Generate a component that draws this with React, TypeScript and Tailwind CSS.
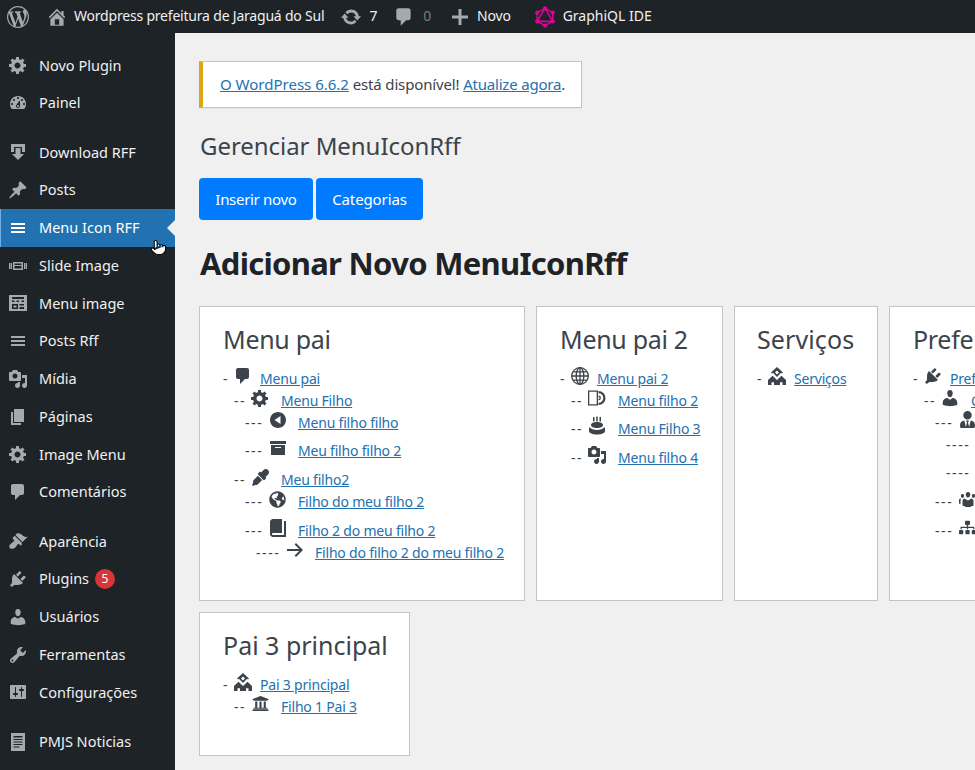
import type { ReactNode } from "react";
import { FaEyeDropper, FaGlobeAmericas, FaSitemap, FaUniversity, FaUserTie } from "react-icons/fa";
import { Pointer } from "lucide-react";

const paths = {
  wp: "M20 10c0-5.51-4.49-10-10-10C4.48 0 0 4.49 0 10c0 5.52 4.48 10 10 10 5.51 0 10-4.48 10-10zM7.780 15.370L4.370 6.220c.550-.020 1.170-.080 1.170-.080.500-.060.440-1.130-.060-1.110 0 0-1.450.110-2.370.110-.180 0-.370 0-.580-.010C4.120 2.690 6.870 1.070 10 1.070c2.330 0 4.450.870 6.050 2.340-.680-.110-1.650.390-1.650 1.580 0 .740.450 1.360.900 2.100.350.610.550 1.360.550 2.460 0 1.490-1.400 5-1.400 5l-3.030-8.350c.540-.020.820-.170.820-.170.500-.050.440-1.250-.060-1.220 0 0-1.440.120-2.380.120-.870 0-2.330-.120-2.330-.120-.500-.030-.560 1.200-.060 1.220l.920.080 1.260 3.410zM17.410 10c.240-.640.740-1.870.430-4.250.700 1.290 1.050 2.710 1.050 4.250 0 3.290-1.730 6.240-4.400 7.780.970-2.590 1.940-5.200 2.920-7.780zM6.100 18.090C3.120 16.650 1.110 13.530 1.110 10c0-1.300.230-2.480.720-3.590C3.250 10.300 4.670 14.200 6.100 18.090zm4.030-6.630l2.580 6.980c-.860.290-1.760.450-2.710.450-.790 0-1.570-.110-2.290-.330.810-2.380 1.620-4.740 2.420-7.100z",
  home: "M16 8.500l1.530 1.530-1.060 1.060L10 4.620l-6.470 6.470-1.060-1.060L10 2.500l4 4v-2h2v4zm-6-2.460l6 5.990V18H4v-5.970zM12 17v-5H8v5h4z",
  update: "M10.200 3.280c3.530 0 6.430 2.610 6.920 6h2.080l-3.500 4-3.500-4h2.320c-.450-1.970-2.210-3.450-4.320-3.450-1.450 0-2.730.710-3.540 1.780L4.950 5.660C6.230 4.200 8.110 3.280 10.200 3.280zm-.400 13.440c-3.520 0-6.430-2.610-6.920-6H.8l3.500-4c1.170 1.330 2.330 2.670 3.500 4H5.480c.450 1.970 2.210 3.450 4.320 3.450 1.450 0 2.730-.710 3.540-1.780l1.710 1.950c-1.280 1.460-3.150 2.380-5.250 2.380z",
  comment: "M5 2h9c1.100 0 2 .9 2 2v7c0 1.100-.9 2-2 2h-2l-5 5v-5H5c-1.100 0-2-.9-2-2V4c0-1.100.9-2 2-2z",
  plus: "M18 8.500v3h-6.500V18h-3v-6.500H2v-3h6.500V2h3v6.500z",
  gear: "M18 12h-2.180c-.170.700-.440 1.350-.810 1.930l1.540 1.540-2.100 2.100-1.540-1.540c-.580.360-1.230.630-1.910.790V19H8v-2.180c-.680-.160-1.330-.430-1.910-.790l-1.540 1.540-2.120-2.120 1.540-1.540c-.360-.580-.630-1.230-.790-1.910H1V9.030h2.170c.160-.700.440-1.350.8-1.940L2.430 5.550l2.100-2.100 1.540 1.540c.580-.370 1.240-.640 1.930-.810V2h3v2.180c.680.160 1.330.430 1.910.790l1.540-1.540 2.120 2.120-1.540 1.540c.360.590.640 1.240.8 1.940H18V12zm-8.500 1.500c1.660 0 3-1.340 3-3s-1.340-3-3-3-3 1.340-3 3 1.340 3 3 3z",
  dashboard: "M3.760 16h12.480c1.100-1.370 1.760-3.110 1.760-5 0-4.420-3.580-8-8-8s-8 3.580-8 8c0 1.890.660 3.630 1.760 5zM10 4c.550 0 1 .450 1 1s-.450 1-1 1-1-.450-1-1 .450-1 1-1zM6 6c.550 0 1 .450 1 1s-.450 1-1 1-1-.450-1-1 .450-1 1-1zm8 0c.550 0 1 .450 1 1s-.450 1-1 1-1-.450-1-1 .450-1 1-1zm-5.370 5.550L12 7v6c0 1.100-.9 2-2 2s-2-.9-2-2c0-.570.240-1.080.630-1.450zM4 10c.550 0 1 .450 1 1s-.450 1-1 1-1-.450-1-1 .450-1 1-1zm12 0c.550 0 1 .450 1 1s-.450 1-1 1-1-.450-1-1 .450-1 1-1zm-5 3c0-.550-.450-1-1-1s-1 .450-1 1 .450 1 1 1 1-.450 1-1z",
  download: "M3 2h14v8h-3V5H6v5H3zM7.500 6h5v6H16l-6 6-6-6h3.500z",
  pin: "M10.440 3.020l1.820-1.820 6.360 6.350-1.830 1.820c-1.050-.680-2.480-.570-3.410.360l-.750.750c-.920.930-1.040 2.350-.350 3.410l-1.830 1.820-2.410-2.410-2.800 2.790c-.420.420-3.380 2.710-3.800 2.290s1.860-3.390 2.280-3.810l2.790-2.790L4.100 9.360l1.830-1.820c1.050.690 2.480.570 3.400-.360l.750-.750c.930-.920 1.050-2.350.360-3.410z",
  menu: "M17 7V5H3v2h14zm0 4V9H3v2h14zm0 4v-2H3v2h14z",
  slides: "M5 6h10v8H5V6zm1.500 1.500v1.500h7V7.500h-7zM6.500 10v2.500h7V10h-7zM1 7h1.500v6H1V7zm2 0h1v6H3V7zM16 7h1v6h-1V7zm1.500 0H19v6h-1.500V7z",
  table: "M1 2h18v16H1V2zm3 2v2h12V4H4zm0 3.500V9h2.500V7.500H4zm4.500 0V9H11V7.500H8.500zm5 0V9H16V7.500h-2.500zM4 11v5h6v-5H4zm1.500 1.500h3v2h-3v-2zM11.500 11v1.500H16V11h-4.500zm0 3v2H16v-2h-4.500z",
  media: "M13 11V4c0-.550-.450-1-1-1h-1.670L9 1H5L3.670 3H2c-.550 0-1 .450-1 1v7c0 .550.450 1 1 1h10c.550 0 1-.450 1-1zM7 4.500c1.380 0 2.500 1.120 2.500 2.500S8.380 9.500 7 9.500 4.500 8.380 4.500 7 5.620 4.500 7 4.500zM14 6h5v10.500c0 1.380-1.120 2.500-2.500 2.500S14 17.880 14 16.500s1.120-2.500 2.500-2.500c.170 0 .340.020.500.050V9h-3V6zm-4 8.050V13h2v3.500c0 1.380-1.120 2.500-2.500 2.500S7 17.880 7 16.500 8.120 14 9.500 14c.170 0 .340.020.500.050z",
  pages: "M6 15V2h10v13H6zm-1 1h8v2H3V5h2v11z",
  brush: "M14.480 11.060L7.410 3.990l1.500-1.500c.500-.560 2.300-.470 3.510.320 1.210.8 1.430 1.280 2.910 2.100 1.180.640 2.450 1.260 4.450.850zm-.710.710L6.700 4.700 4.930 6.470c-.390.390-.390 1.020 0 1.410l1.060 1.060c.390.390.390 1.030 0 1.420-.6.600-1.430 1.110-2.210 1.690-.350.260-.7.530-1.010.840C1.430 13.230.78 15.960 2 17.180c1.220 1.220 3.950.570 5.290-.770.310-.310.580-.660.840-1.010.580-.780 1.090-1.610 1.690-2.210.390-.390 1.030-.390 1.420 0l1.060 1.060c.390.390 1.020.390 1.410 0z",
  plugin: "M13.110 4.360L9.870 7.600 8 5.730l3.240-3.240c.350-.340 1.050-.2 1.560.320.520.510.660 1.210.310 1.550zm-8 1.770l.910-1.120 9.010 9.010-1.190.840c-.710.710-2.630 1.160-3.820 1.160H6.140L4.900 17.260c-.590.590-1.540.590-2.120 0-.590-.580-.590-1.530 0-2.120l1.240-1.240v-3.880c0-1.130.4-3.190 1.090-3.890zm7.260 3.970l3.240-3.240c.340-.350 1.040-.210 1.550.310.520.510.660 1.210.310 1.550l-3.240 3.250z",
  users: "M10 9.250c-2.270 0-2.730-3.440-2.730-3.440C7 4.020 7.820 2 9.970 2c2.160 0 2.980 2.020 2.710 3.810 0 0-.410 3.440-2.680 3.440zm0 2.570L12.720 10c2.390 0 4.520 2.330 4.520 4.530v2.490s-3.650 1.130-7.240 1.130c-3.650 0-7.240-1.130-7.240-1.130v-2.490c0-2.250 1.940-4.480 4.470-4.480z",
  tools: "M16.680 9.770c-1.340 1.340-3.300 1.670-4.950.990l-5.410 6.520c-.990.990-2.590.990-3.580 0s-.990-2.590 0-3.570l6.520-5.420c-.680-1.650-.350-3.610.990-4.950 1.280-1.280 3.120-1.620 4.720-1.060l-2.890 2.890 2.820 2.820 2.860-2.870c.530 1.580.180 3.390-1.080 4.650zM3.810 16.210c.4.390 1.040.390 1.430 0 .4-.4.4-1.040 0-1.430-.390-.4-1.030-.4-1.430 0-.390.390-.390 1.030 0 1.430z",
  settings: "M18 16V4c0-.550-.450-1-1-1H3c-.550 0-1 .450-1 1v12c0 .550.450 1 1 1h14c.550 0 1-.450 1-1zM8 11h1c.550 0 1 .450 1 1s-.450 1-1 1H8v1.500c0 .280-.220.500-.500.500s-.500-.220-.500-.500V13H6c-.550 0-1-.450-1-1s.450-1 1-1h1V5.500c0-.280.220-.500.500-.500s.500.220.500.500V11zm5-2h-1c-.550 0-1-.450-1-1s.450-1 1-1h1V5.500c0-.280.220-.500.500-.500s.500.220.500.500V7h1c.550 0 1 .450 1 1s-.450 1-1 1h-1v5.500c0 .280-.220.500-.500.500s-.500-.220-.500-.500V9z",
  post: "M3 1h14v18H3V1zm2.500 3v1.500h9V4h-9zm0 3v1h9V7h-9zm0 2.500v1h9v-1h-9zm0 2.500v1h9v-1h-9zm0 2.500v1h6v-1h-6z",
  arrowCircle: "M10 2c4.420 0 8 3.580 8 8s-3.580 8-8 8-8-3.580-8-8 3.580-8 8-8zm2.500 12V6l-6 4z",
  archive: "M18 3v3H2V3h16zM3 7h14v10H3V7zm10 3V9H7v1h6z",
  arrowRight: "M11 3l7 7-7 7-1.400-1.400L14.200 11H2V9h12.200L9.600 4.400z",
  book: "M16 3h2v16H5c-1.660 0-3-1.340-3-3V4c0-1.660 1.340-3 3-3h9v14H5c-.550 0-1 .450-1 1s.450 1 1 1h11V3z",
  album: "M1 2.500h10v15H1v-15zm1.300 1.300v12.400h7.400V3.800H2.300zM11.500 3a7 7 0 0 1 0 14v-2.200a4.800 4.800 0 0 0 0-9.600V3zm0 4.600a2.400 2.400 0 0 1 0 4.800v-1.300a1.100 1.100 0 0 0 0-2.200V7.600z",
  cake: "M6 1h1.500v4.500H6zM9.250.5h1.500v5h-1.500zM12.500 1H14v4.500h-1.500zM10 6c3.300 0 6 1.200 6 3s-2.700 3-6 3-6-1.200-6-3 2.700-3 6-3zM2 12.500c0-.6.300-1 .8-1.300C4 13 6.800 14 10 14s6-1 7.200-2.800c.5.300.8.700.8 1.300v2.500c0 2-3.600 3.500-8 3.500s-8-1.500-8-3.500v-2.500z",
  multisite: "M10 1l6 5.500-1 1-.9-.8L10 11 5.900 6.700l-.9.800-1-1L10 1zm0 3.600L8 6.600l2 2 2-2-2-2zM1 14l4.500-4.200L10 14l4.500-4.200L19 14v5h-3.500v-2.800h-2.500V19H7v-2.800H4.500V19H1v-5z",
  groups: "M10 3c1.500 0 2.500 1.200 2.300 2.800-.2 1.400-1 2.700-2.300 2.700s-2.100-1.300-2.300-2.700C7.500 4.200 8.500 3 10 3zM4.500 5c1 0 1.800.8 1.600 2-.1 1-.8 1.900-1.600 1.900S3 8 2.900 7c-.2-1.200.6-2 1.600-2zm11 0c1 0 1.800.8 1.600 2-.1 1-.8 1.900-1.600 1.900S14 8 13.900 7c-.2-1.200.6-2 1.600-2zM6.500 9.500l3.500 2 3.500-2c1.200.3 2 1.200 2 2.700v4.300L12 18H8l-3.500-1.500v-4.300c0-1.500.8-2.400 2-2.700zM1 10.500c.5-.7 1.300-1 2.200-1-.4.700-.7 1.600-.7 2.700v3L1 14.500v-4zm18 0v4l-1.500.7v-3c0-1.100-.3-2-.7-2.700.9 0 1.700.3 2.200 1z",
};

function Dash({ d, className = "w-5 h-5" }: { d: string; className?: string }) {
  return (
    <svg viewBox="0 0 20 20" fill="currentColor" fillRule="evenodd" className={className}>
      <path d={d} />
    </svg>
  );
}

function GlobeGrid() {
  return (
    <svg viewBox="0 0 20 20" fill="none" stroke="currentColor" strokeWidth="1.300" className="w-5 h-5">
      <circle cx="10" cy="10" r="8.300" />
      <ellipse cx="10" cy="10" rx="3.800" ry="8.300" />
      <path d="M10 1.700v16.600M1.700 10h16.600M3 5.800h14M3 14.200h14" />
    </svg>
  );
}

function GraphqlLogo() {
  return (
    <svg viewBox="0 0 24 24" className="w-[22px] h-[24px] text-[#e10098]" fill="none" stroke="currentColor" strokeWidth="1.500">
      <polygon points="12,2.500 20.500,7.300 20.500,16.800 12,21.500 3.500,16.800 3.500,7.300" />
      <polygon points="12,2.500 20.500,16.800 3.500,16.800" strokeWidth="1.700" />
      <g fill="currentColor" stroke="none">
        <circle cx="12" cy="2.500" r="2.300" />
        <circle cx="20.500" cy="7.300" r="2.300" />
        <circle cx="20.500" cy="16.800" r="2.300" />
        <circle cx="12" cy="21.500" r="2.300" />
        <circle cx="3.500" cy="16.800" r="2.300" />
        <circle cx="3.500" cy="7.300" r="2.300" />
      </g>
    </svg>
  );
}

function TopBar() {
  return (
    <header className="h-[33px] bg-[#1d2327] text-[#f0f0f1] text-[14px] tracking-[-0.2px] flex items-center shrink-0 whitespace-nowrap">
      <span className="ml-[7px] text-[#a7aaad]"><Dash d={paths.wp} className="w-[22px] h-[22px]" /></span>
      <span className="ml-[17px] text-[#a7aaad]"><Dash d={paths.home} className="w-[22px] h-[22px]" /></span>
      <span className="ml-[6px] -mt-[2px]">Wordpress prefeitura de Jaraguá do Sul</span>
      <span className="ml-[16px] text-[#a7aaad]"><Dash d={paths.update} className="w-[22px] h-[22px]" /></span>
      <span className="ml-[7px] -mt-[2px]">7</span>
      <span className="ml-[16px] text-[#a7aaad]"><Dash d={paths.comment} className="w-[22px] h-[22px]" /></span>
      <span className="ml-[8px] -mt-[2px] text-[#787c82]">0</span>
      <span className="ml-[19px] text-[#a7aaad]"><Dash d={paths.plus} /></span>
      <span className="ml-[7px] -mt-[2px]">Novo</span>
      <span className="ml-[23px]"><GraphqlLogo /></span>
      <span className="ml-[7px] -mt-[2px] tracking-normal">GraphiQL IDE</span>
    </header>
  );
}

const sideItems: { label: string; d: string; gap?: boolean; active?: boolean; badge?: string }[] = [
  { label: "Novo Plugin", d: paths.gear },
  { label: "Painel", d: paths.dashboard },
  { label: "Download RFF", d: paths.download, gap: true },
  { label: "Posts", d: paths.pin },
  { label: "Menu Icon RFF", d: paths.menu, active: true },
  { label: "Slide Image", d: paths.slides },
  { label: "Menu image", d: paths.table },
  { label: "Posts Rff", d: paths.menu },
  { label: "Mídia", d: paths.media },
  { label: "Páginas", d: paths.pages },
  { label: "Image Menu", d: paths.gear },
  { label: "Comentários", d: paths.comment },
  { label: "Aparência", d: paths.brush, gap: true },
  { label: "Plugins", d: paths.plugin, badge: "5" },
  { label: "Usuários", d: paths.users },
  { label: "Ferramentas", d: paths.tools },
  { label: "Configurações", d: paths.settings },
  { label: "PMJS Noticias", d: paths.post, gap: true },
  { label: "", d: paths.post },
];

function Sidebar() {
  return (
    <aside className="w-[175px] shrink-0 bg-[#1d2327] pt-[13.500px] text-[14.500px] text-[#f0f0f1]">
      {sideItems.map((item, i) => (
        <div
          key={i}
          className={
            "relative h-[37.750px] flex items-center whitespace-nowrap " +
            (item.gap ? "mt-[11.500px] " : "") +
            (item.active ? "bg-[#2271b1] text-white border-l border-[#72aee6] pl-[7px]" : "pl-[8px]")
          }
        >
          <span className={item.active ? "text-white" : "text-[#a7aaad]"}>
            <Dash d={item.d} />
          </span>
          <span className="ml-[11px]">{item.label}</span>
          {item.badge && (
            <span className="ml-[6px] w-5 h-5 rounded-full bg-[#d63638] text-white text-[12px] flex items-center justify-center">
              {item.badge}
            </span>
          )}
          {item.active && (
            <>
              <span className="absolute right-0 top-[11px] border-y-[8px] border-y-transparent border-r-[8px] border-r-[#f0f0f1]" />
              <span className="absolute left-[149px] top-[30px] text-black">
                <Pointer size={17} fill="white" strokeWidth={1.500} />
              </span>
            </>
          )}
        </div>
      ))}
    </aside>
  );
}

type Row = { level: 0 | 1 | 2 | 3; icon: ReactNode; text?: string; leaf?: boolean };

const indent = ["", "pl-[11px]", "pl-[22px]", "pl-[33px]"];
const dashBox = ["w-[9.500px]", "w-[16px]", "w-[22.500px]", "w-[29px]"];
const linkGap = ["ml-[7.500px]", "ml-[11px]", "ml-[10.500px]", "ml-[10px]"];
const dashes = ["-", "--", "---", "----"];

function d(p: string) {
  return <Dash d={p} />;
}
const fa = "w-[17px] h-[17px]";

function TreeRow({ row }: { row: Row }) {
  return (
    <div className={"h-[22px] flex items-center whitespace-nowrap " + indent[row.level] + (row.leaf ? " mb-[6.750px]" : "")}>
      <span className={"shrink-0 tracking-[1.600px] " + dashBox[row.level]}>{dashes[row.level]}</span>
      {row.icon && <span className="shrink-0 w-5 h-5 -mt-[5px] flex items-center justify-center text-[#3c434a]">{row.icon}</span>}
      {row.text && <a href="#" className={"underline tracking-[-0.2px] text-[#2271b1] " + linkGap[row.level]}>{row.text}</a>}
    </div>
  );
}

function Card({ title, rows, className, titleClass = "tracking-[-0.3px]" }: { title: string; rows: Row[]; className?: string; titleClass?: string }) {
  return (
    <section className={"bg-white border border-[#c3c4c7] pt-[13px] px-[23px] pb-[37px] " + (className ?? "")}>
      <h3 className={"text-[25px] leading-[38px] text-[#3c434a] whitespace-nowrap mb-[9px] " + titleClass}>{title}</h3>
      <div className="text-[14px] text-[#3c434a]">
        {rows.map((row, i) => (
          <TreeRow key={i} row={row} />
        ))}
      </div>
    </section>
  );
}

const card1: Row[] = [
  { level: 0, icon: d(paths.comment), text: "Menu pai" },
  { level: 1, icon: d(paths.gear), text: "Menu Filho" },
  { level: 2, icon: d(paths.arrowCircle), text: "Menu filho filho", leaf: true },
  { level: 2, icon: d(paths.archive), text: "Meu filho filho 2", leaf: true },
  { level: 1, icon: <FaEyeDropper className={fa} />, text: "Meu filho2" },
  { level: 2, icon: <FaGlobeAmericas className={fa} />, text: "Filho do meu filho 2", leaf: true },
  { level: 2, icon: d(paths.book), text: "Filho 2 do meu filho 2" },
  { level: 3, icon: d(paths.arrowRight), text: "Filho do filho 2 do meu filho 2" },
];
const card2: Row[] = [
  { level: 0, icon: <GlobeGrid />, text: "Menu pai 2" },
  { level: 1, icon: d(paths.album), text: "Menu filho 2", leaf: true },
  { level: 1, icon: d(paths.cake), text: "Menu Filho 3", leaf: true },
  { level: 1, icon: d(paths.media), text: "Menu filho 4" },
];
const card3: Row[] = [{ level: 0, icon: d(paths.multisite), text: "Serviços" }];
const card4: Row[] = [
  { level: 0, icon: d(paths.plugin), text: "Prefeitura" },
  { level: 1, icon: d(paths.users), text: "Cargos" },
  { level: 2, icon: <FaUserTie className={fa} /> },
  { level: 3, icon: null, leaf: true },
  { level: 3, icon: null, leaf: true },
  { level: 2, icon: d(paths.groups), leaf: true },
  { level: 2, icon: <FaSitemap className={fa} /> },
];
const card5: Row[] = [
  { level: 0, icon: d(paths.multisite), text: "Pai 3 principal" },
  { level: 1, icon: <FaUniversity className={fa} />, text: "Filho 1 Pai 3" },
];

export default function App() {
  return (
    <div className="w-[975px] h-[770px] overflow-hidden flex flex-col bg-[#f0f0f1] text-[14px] font-['Noto_Sans',sans-serif]">
      <TopBar />
      <div className="flex flex-1 min-h-0">
        <Sidebar />
        <main className="flex-1 min-w-0 overflow-hidden pl-[24px] pt-[28px]">
          <div className="w-[383px] h-[47px] bg-white border border-[#c3c4c7] border-l-4 border-l-[#dba617] shadow-[0_1px_1px_rgba(0,0,0,0.04)] flex items-center pl-[17px] text-[15px] text-[#3c434a] whitespace-nowrap">
            <a href="#" className="underline text-[#2271b1]">O WordPress 6.6.2</a>
            <span className="tracking-[-0.15px]">&nbsp;está disponível!&nbsp;</span>
            <a href="#" className="underline tracking-[-0.2px] text-[#2271b1]">Atualize agora</a>
            <span>.</span>
          </div>
          <h1 className="mt-[21px] text-[24px] leading-[34px] tracking-[-0.05px] text-[#3c434a] pl-px">Gerenciar MenuIconRff</h1>
          <div className="mt-[15px] flex gap-[3px]">
            <button className="w-[114px] h-[42px] rounded bg-[#007bff] text-white text-[15px] tracking-[-0.3px]">Inserir novo</button>
            <button className="w-[107px] h-[42px] rounded bg-[#007bff] text-white text-[15px] tracking-[-0.1px]">Categorias</button>
          </div>
          <h2 className="mt-[20px] text-[31px] leading-[46px] font-bold tracking-[-0.7px] text-[#1d2327] pl-px whitespace-nowrap">Adicionar Novo MenuIconRff</h2>
          <div className="mt-[20px] w-[1100px] flex flex-wrap gap-[11px]">
            <Card title="Menu pai" rows={card1} className="w-[326px]" />
            <Card title="Menu pai 2" rows={card2} className="w-[187px]" />
            <Card title="Serviços" rows={card3} className="w-[144px] pl-[22px]" titleClass="tracking-[0.1px]" />
            <Card title="Prefeitura" rows={card4} className="w-[330px]" />
            <Card title="Pai 3 principal" rows={card5} className="w-[211px] h-[144px]" titleClass="tracking-normal" />
          </div>
        </main>
      </div>
    </div>
  );
}
